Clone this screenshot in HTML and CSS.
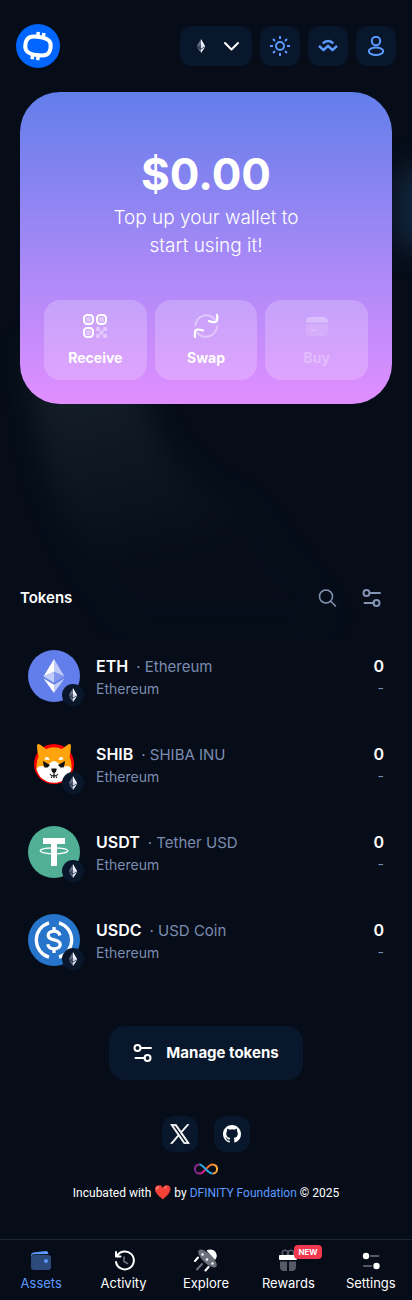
FILE: index.html
```html
<!DOCTYPE html>
<html lang="en">
<head>
<meta charset="utf-8">
<meta name="viewport" content="width=device-width, initial-scale=1">
<title>Wallet</title>
<link rel="stylesheet" href="styles.css">
</head>
<body>
<svg class="defs" aria-hidden="true">
  <symbol id="eth-mini" viewBox="0 0 22 22">
    <path fill="#66718c" d="M11 4 6.800 11.200 11 13.600zM11 14.400 6.800 12 11 18z"/>
    <path fill="#f4f6fb" d="M11 4l4.200 7.200L11 13.600zM11 14.400l4.200-2.400L11 18z"/>
    <path fill="#d3d9e6" d="M11 9.400l4.200 1.800L11 13.600z"/>
    <path fill="#46516d" d="M11 9.400 6.800 11.200 11 13.600z"/>
  </symbol>
  <symbol id="sliders" viewBox="0 0 20 20">
    <g fill="none" stroke="currentColor" stroke-width="2" stroke-linecap="round">
      <circle cx="4.500" cy="5" r="3"/><path d="M8 5h10M2.500 15H12"/><circle cx="14.500" cy="15" r="3"/>
    </g>
  </symbol>
</svg>
<div class="page">
  <svg class="backdrop" viewBox="0 0 412 640" aria-hidden="true">
    <defs>
      <filter id="soft" x="-50%" y="-50%" width="200%" height="200%" color-interpolation-filters="sRGB"><feGaussianBlur stdDeviation="13"/></filter>
      <linearGradient id="fade" gradientUnits="userSpaceOnUse" x1="80" y1="390" x2="130" y2="570"><stop offset="0" stop-color="#141e27"/><stop offset="1" stop-color="#060d19"/></linearGradient>
    </defs>
    <path d="M32 340H136C142 420 165 480 240 505L330 620H130C60 540 30 450 32 340z" fill="url(#fade)" filter="url(#soft)"/>
    <rect x="396" y="168" width="60" height="82" rx="20" fill="#12253c" filter="url(#soft)"/>
  </svg>

  <header class="topbar">
    <a class="logo" href="#" aria-label="Home">
      <svg viewBox="0 0 44 44" aria-hidden="true">
        <circle cx="22" cy="22" r="22" fill="#0066ff"/>
        <g fill="none" stroke="#fff" stroke-width="4" transform="rotate(9 22 22)">
          <path d="M22 12.800c9 0 12.700 2.200 12.700 9.200S31 31.200 22 31.200 9.300 29 9.300 22 13 12.800 22 12.800z"/>
          <path stroke-width="3.500" d="M20.200 8.200v4M25.800 8.200v4M18.200 32v4M23.800 32v4"/>
        </g>
      </svg>
    </a>
    <div class="tools">
      <button class="tool tool-network" aria-label="Select network">
        <svg class="i22" aria-hidden="true"><circle cx="11" cy="11" r="10.500" fill="none" stroke="#0c1a2e"/><use href="#eth-mini"/></svg>
        <svg class="i20" viewBox="0 0 20 20" aria-hidden="true"><path d="M3 7l6.500 6.500L16 7" fill="none" stroke="#fff" stroke-width="2" stroke-linecap="round" stroke-linejoin="round"/></svg>
      </button>
      <button class="tool" aria-label="Theme">
        <svg class="i20" viewBox="0 0 20 20" fill="none" stroke="currentColor" stroke-width="2" aria-hidden="true"><circle cx="10" cy="10" r="4"/><path d="M10 0v3M10 17v3M0 10h3M17 10h3M3 3l2 2M15 15l2 2M17 3l-2 2M5 15l-2 2"/></svg>
      </button>
      <button class="tool" aria-label="WalletConnect">
        <svg class="i20" viewBox="0 0 20 20" fill="none" stroke="currentColor" stroke-width="2.500" stroke-linejoin="round" aria-hidden="true"><path d="M4.800 7.500c3-3.300 7.600-3.300 10.500 0M1 9.800l4.500 4.300L10 9.800l4.500 4.300L19 9.800"/></svg>
      </button>
      <button class="tool" aria-label="Account">
        <svg class="i20" viewBox="0 0 20 20" fill="none" stroke="currentColor" stroke-width="2" aria-hidden="true"><circle cx="10" cy="5" r="4.200"/><ellipse cx="10" cy="15.300" rx="7.200" ry="3.700"/></svg>
      </button>
    </div>
  </header>

  <main>
    <section class="hero">
      <p class="balance">$0.00</p>
      <p class="tagline">Top up your wallet to<br>start using it!</p>
      <div class="actions">
        <button class="action">
          <svg class="i26" viewBox="0 0 26 26" aria-hidden="true">
            <g fill="none" stroke="#fff" stroke-width="2"><rect x="2" y="2" width="9" height="9" rx="3.200"/><rect x="15" y="2" width="9" height="9" rx="3.200"/><rect x="2" y="15" width="9" height="9" rx="3.200"/></g>
            <g fill="#fff" opacity=".4"><circle cx="6.500" cy="6.500" r="2.700"/><circle cx="19.500" cy="6.500" r="2.700"/><circle cx="6.500" cy="19.500" r="2.700"/><rect x="14" y="14" width="4" height="4" rx="1"/><rect x="21" y="14" width="4" height="4" rx="1"/><rect x="17.500" y="17.500" width="4" height="4" rx="1"/><rect x="14" y="21" width="4" height="4" rx="1"/><rect x="21" y="21" width="4" height="4" rx="1"/></g>
          </svg>
          Receive
        </button>
        <button class="action">
          <svg class="i26" viewBox="0 0 26 26" fill="none" stroke="#fff" stroke-width="2" stroke-linecap="round" stroke-linejoin="round" aria-hidden="true">
            <path opacity=".4" d="M2.500 12.500C3.500 2 15.500-1 22 6.500M24 13.500C23 24 10.500 27 4 19.500"/>
            <path stroke-width="2.300" d="M24 2c1 6.500 0 8.500-8 6.200M2 24c-.6-7 0-9 8-6.500"/>
          </svg>
          Swap
        </button>
        <button class="action" disabled>
          <svg class="i26" viewBox="0 0 26 26" aria-hidden="true"><path fill="#fff" opacity=".4" d="M2 11h22v7.500q0 4.500-4.500 4.500h-13Q2 23 2 18.500z"/><path fill="#fff" d="M2 9.500Q2 4 7 4h12q5 0 5 5.500z"/><path stroke="#fff" stroke-width="1.600" stroke-linecap="round" d="M7 17h4"/></svg>
          Buy
        </button>
      </div>
    </section>

    <section class="tokens">
      <div class="tokens-head">
        <h2>Tokens</h2>
        <div class="tokens-tools">
          <button class="plain" aria-label="Search"><svg class="i20" viewBox="0 0 20 20" fill="none" stroke="currentColor" stroke-width="1.500" stroke-linecap="round" aria-hidden="true"><circle cx="8" cy="8.500" r="6.500"/><path d="M13 13.500l4.500 4.500"/></svg></button>
          <button class="plain" aria-label="Filter tokens"><svg class="i20" aria-hidden="true"><use href="#sliders"/></svg></button>
        </div>
      </div>
      <ul class="token-list">
        <li class="token">
          <div class="coin">
            <svg class="i52" viewBox="0 0 52 52" aria-hidden="true"><circle cx="26" cy="26" r="26" fill="#627eea"/><path fill="#fff" d="M26 9 15.500 26.600 26 21.800zM15.500 28.600 26 34.800V43z"/><path fill="#c0cbf7" d="M26 9l10.500 17.600L26 21.800zM15.500 26.600 26 21.800V32.800zM26 34.800l10.500-6.200L26 43z"/><path fill="#8197ee" d="M26 21.800l10.500 4.800L26 32.800z"/></svg>
            <svg class="badge" aria-hidden="true"><use href="#eth-mini"/></svg>
          </div>
          <div class="names"><p class="pair"><strong>ETH</strong><span>· Ethereum</span></p><p class="network">Ethereum</p></div>
          <div class="amounts"><strong>0</strong><span class="network">-</span></div>
        </li>
        <li class="token">
          <div class="coin">
            <svg class="i52" viewBox="0 0 52 52" aria-hidden="true">
              <circle cx="26" cy="26" r="20" fill="#fa0000"/>
              <path fill="#ffa40d" d="M9 8q0-3 3-1.500L18 11q8-3.500 16 0l6-4.500q3-1.500 3 1.500-.2 6-1.500 10.500Q44 24 43.500 32q-3 4-9.500 8L18 40q-7-4-9.500-8Q8 24 10.500 18.500 9 13 9 8z"/>
              <path fill="#fff" d="M8.600 31q2-4 7.400-2.500l4.500-1.500Q23 23 26 23t5.500 4l4.500 1.500q5.400-1.500 7.400 2.500-2 9-10.400 12.500Q26 46 19 43.500 10.600 40 8.600 31z"/>
              <path fill="#fff" d="M16.500 21.500q0-3 3-2.500 2 .5 1.800 3zM35.500 21.500q0-3-3-2.500-2 .5-1.800 3z"/>
              <path fill="#111" d="M15 23l7 4-2.500 2.500h-3Q15 26 15 23zM37 23l-7 4 2.500 2.500h3Q37 26 37 23zM23.500 30.500h5q.8 3.500-2.500 4.500-3.300-1-2.500-4.500z"/>
              <path fill="none" stroke="#111" stroke-width="1.200" d="M26 34v3.500M22 36q2 2.500 4 1.500 2 1 4-1.500M23.500 38.500v1.500M28.500 38.500v1.500M26 38v2"/>
            </svg>
            <svg class="badge" aria-hidden="true"><use href="#eth-mini"/></svg>
          </div>
          <div class="names"><p class="pair"><strong>SHIB</strong><span>· SHIBA INU</span></p><p class="network">Ethereum</p></div>
          <div class="amounts"><strong>0</strong><span class="network">-</span></div>
        </li>
        <li class="token">
          <div class="coin">
            <svg class="i52" viewBox="0 0 52 52" aria-hidden="true"><circle cx="26" cy="26" r="26" fill="#50af95"/><path fill="#fff" d="M15 12h22v6h-8v22h-6V18h-8z"/><ellipse cx="26" cy="24.800" rx="13.800" ry="3" fill="none" stroke="#fff" stroke-width="1.200"/></svg>
            <svg class="badge" aria-hidden="true"><use href="#eth-mini"/></svg>
          </div>
          <div class="names"><p class="pair"><strong>USDT</strong><span>· Tether USD</span></p><p class="network">Ethereum</p></div>
          <div class="amounts"><strong>0</strong><span class="network">-</span></div>
        </li>
        <li class="token">
          <div class="coin">
            <svg class="i52" viewBox="0 0 52 52" aria-hidden="true"><circle cx="26" cy="26" r="26" fill="#2775ca"/><g fill="none" stroke="#fff" stroke-width="3.300"><path d="M21 8.800a18 18 0 0 0 0 34.400M31 8.800a18 18 0 0 1 0 34.400"/><path d="M32 21.500c-.8-3-3-4.300-6-4.300-3.500 0-5.800 1.700-5.800 4.300 0 6 12 2.800 12 9 0 2.700-2.600 4.300-6.200 4.300-3.400 0-5.600-1.500-6.200-4.600M26 13v4.200M26 34.800V39"/></g></svg>
            <svg class="badge" aria-hidden="true"><use href="#eth-mini"/></svg>
          </div>
          <div class="names"><p class="pair"><strong>USDC</strong><span>· USD Coin</span></p><p class="network">Ethereum</p></div>
          <div class="amounts"><strong>0</strong><span class="network">-</span></div>
        </li>
      </ul>
      <button class="manage"><svg class="i20" aria-hidden="true"><use href="#sliders"/></svg>Manage tokens</button>
    </section>
  </main>

  <footer class="footer">
    <div class="socials">
      <a href="#" aria-label="X"><svg class="i20" viewBox="0 0 24 24" fill="currentColor" aria-hidden="true"><path d="M14.200 10.200 22.600.6h-2L13.300 9 7.500.6H.8l8.800 12.700L.8 23.400h2l7.700-8.900 6.100 8.900h6.700zM11.500 13.300l-.9-1.300L3.500 2.100h3.100l5.700 8.200.9 1.300 7.500 10.600h-3.100z" stroke="currentColor" stroke-width=".9"/></svg></a>
      <a href="#" aria-label="GitHub"><svg class="i18" viewBox="0 0 16 16" fill="currentColor" aria-hidden="true"><path d="M8 0C3.580 0 0 3.580 0 8c0 3.540 2.290 6.530 5.470 7.590.4.070.55-.17.55-.38v-1.490c-2.010.37-2.530-.49-2.690-.94-.09-.23-.48-.94-.82-1.130-.28-.15-.68-.52-.01-.53.63-.01 1.080.58 1.230.82.72 1.210 1.870.87 2.330.66.07-.52.28-.87.51-1.070-1.780-.2-3.640-.89-3.640-3.950 0-.87.31-1.590.82-2.150-.08-.2-.36-1.020.08-2.120 0 0 .67-.21 2.200.82a7.500 7.500 0 0 1 4 0c1.530-1.040 2.200-.82 2.200-.82.44 1.100.16 1.920.08 2.120.51.56.82 1.270.82 2.150 0 3.070-1.870 3.750-3.650 3.950.29.25.54.73.54 1.480v2.200c0 .21.15.46.55.38A8 8 0 0 0 16 8c0-4.420-3.580-8-8-8z"/></svg></a>
    </div>
    <svg class="infinity" viewBox="0 0 24 12" fill="none" stroke-width="2" aria-hidden="true">
      <defs>
        <linearGradient id="warm"><stop offset="0" stop-color="#f15a24"/><stop offset="1" stop-color="#fbb03b"/></linearGradient>
        <linearGradient id="pink"><stop offset="0" stop-color="#7b2a90"/><stop offset="1" stop-color="#ed1e79"/></linearGradient>
      </defs>
      <path stroke="url(#warm)" d="M12 6c3-3.500 4.300-4.600 6.500-4.600A4.600 4.600 0 0 1 18.500 10.600"/>
      <path stroke="url(#pink)" d="M12 6c-3 3.500-4.300 4.600-6.500 4.600A4.600 4.600 0 0 1 5.500 1.400"/>
      <path stroke="#29abe2" d="M5.500 1.400C9.500 1.400 13.500 10.600 18.500 10.600"/>
    </svg>
    <p class="credit">Incubated with <span class="heart">❤️</span> by <a href="#">DFINITY Foundation</a> © 2025</p>
  </footer>

  <nav class="tabs">
    <a class="active" href="#" aria-current="page"><svg class="i24" viewBox="0 0 24 24" aria-hidden="true"><rect x="2" y="6" width="20" height="15" rx="3" fill="#2c4a7c"/><path fill="#5c9aff" d="M2 6.500Q2 4 4.500 3.500L17 2q2-.2 2.500 3L5 5.300Q3 5.400 2 7.500z"/><circle cx="17" cy="12" r="2" fill="#5c9aff"/></svg>Assets</a>
    <a href="#"><svg class="i24" viewBox="0 0 24 24" fill="none" stroke="#fff" stroke-width="2" stroke-linecap="round" stroke-linejoin="round" aria-hidden="true"><path d="M4 3v4.500h4.500M5 7a9 9 0 1 1-1 6"/><path stroke="#6a717d" stroke-width="1.600" d="M12 8v4.500l3.500 2"/></svg>Activity</a>
    <a href="#"><svg class="i24" viewBox="0 0 24 24" aria-hidden="true"><path fill="#fff" d="M12.500 1.500C16-.5 20 .5 21.500 3s2 5-.5 8z"/><ellipse cx="13.500" cy="9.500" rx="12" ry="4.800" transform="rotate(44 13.500 9.500)" fill="#6b717b"/><g fill="#fff"><circle cx="8.500" cy="5.500" r="1.200"/><circle cx="13" cy="10.500" r="1.200"/><circle cx="18.500" cy="14.500" r="1.200"/></g><path stroke="#fff" stroke-width="2" stroke-linecap="round" d="M4 8.500 1 12M14.500 18l-3 3.500"/><path stroke="#6b717b" stroke-width="2" stroke-linecap="round" d="M8 15l-5 5.500"/></svg>Explore</a>
    <a href="#"><span class="gift"><svg class="i24" viewBox="0 0 24 24" aria-hidden="true"><g fill="none" stroke="#555c67" stroke-width="1.600"><circle cx="9" cy="4" r="2.800"/><circle cx="15" cy="4" r="2.800"/></g><path fill="#555c67" d="M4 12.500h7V22H8q-4 0-4-4zM13 12.500h7V18q0 4-4 4h-3z"/><rect x="3" y="6" width="18" height="5" rx="1" fill="#fff"/></svg><span class="new">NEW</span></span>Rewards</a>
    <a href="#"><svg class="i24" viewBox="0 0 24 24" aria-hidden="true"><path stroke="#555c67" stroke-width="2" stroke-linecap="round" d="M12 7h7.500M5 17h7"/><circle cx="7" cy="7" r="3.200" fill="#fff"/><circle cx="17.500" cy="17" r="3.200" fill="#fff"/></svg>Settings</a>
  </nav>
</div>
</body>
</html>
```
FILE: styles.css
```css
* { box-sizing: border-box; margin: 0; padding: 0; }
body { background: #060d19; color: #fff; font-family: Inter, "Liberation Sans", sans-serif; font-size: 15px; line-height: 24px; }
button { border: 0; background: none; color: inherit; font: inherit; cursor: pointer; }
a { color: inherit; text-decoration: none; }
svg { display: block; flex: none; }
ul { list-style: none; }
.defs { position: absolute; width: 0; height: 0; }

.i18 { width: 18px; height: 18px; }
.i20 { width: 20px; height: 20px; }
.i22 { width: 22px; height: 22px; }
.i24 { width: 24px; height: 24px; }
.i26 { width: 26px; height: 26px; }
.i52 { width: 52px; height: 52px; }

.page { position: relative; isolation: isolate; display: flex; flex-direction: column; min-height: 100vh; }
.backdrop { position: absolute; top: 0; left: 0; width: 100%; z-index: -1; overflow: hidden; }

.topbar { display: flex; align-items: center; justify-content: space-between; padding: 24px 16px; }
.logo svg { width: 44px; height: 44px; }
.tools { display: flex; gap: 8px; }
.tool { display: flex; align-items: center; justify-content: center; width: 40px; height: 40px; border-radius: 12px; background: #08172b; color: #5c9aff; }
.tool-network { width: 72px; gap: 10px; }

main { padding: 0 20px; }
.hero { padding: 52px 24px 24px; border-radius: 40px; background: linear-gradient(#627eea, #b18af8 62%, #e18eff); text-align: center; }
.balance { font-size: 44px; line-height: 60px; font-weight: 700; }
.tagline { font-size: 19px; line-height: 28px; font-weight: 300; }
.actions { display: grid; grid-template-columns: repeat(3, 1fr); gap: 8px; margin-top: 40px; }
.action { display: flex; flex-direction: column; align-items: center; gap: 9px; height: 80px; padding-top: 13px; border-radius: 16px; background: rgba(255, 255, 255, .2); font-size: 14px; line-height: 20px; font-weight: 700; }
.action:disabled { color: rgba(255, 255, 255, .3); }
.action:disabled svg { opacity: .3; }

.tokens { display: flex; flex-direction: column; margin-top: 172px; }
.tokens-head { display: flex; align-items: center; justify-content: space-between; height: 44px; }
.tokens-head h2 { font-size: 15px; font-weight: 600; }
.tokens-tools { display: flex; gap: 4px; color: #8494b5; }
.plain { display: grid; place-items: center; width: 40px; height: 40px; }
.token-list { margin-top: 12px; }
.token { display: flex; align-items: center; gap: 16px; padding: 18px 8px; }
.coin { position: relative; }
.badge { position: absolute; right: -4px; bottom: -4px; width: 22px; height: 22px; border-radius: 50%; background: #08172b; }
.names { flex: 1; }
.pair { display: flex; align-items: baseline; gap: 8px; color: #7b8cae; }
.pair strong { color: #fff; font-size: 16px; font-weight: 600; }
.network { color: #7b8cae; font-size: 14px; line-height: 20px; }
.amounts { display: flex; flex-direction: column; align-items: flex-end; }
.amounts strong { font-size: 16px; font-weight: 600; }
.manage { display: flex; align-items: center; align-self: center; gap: 13px; height: 54px; margin-top: 42px; padding: 0 24px; border-radius: 16px; background: #08172b; font-weight: 700; }

.footer { display: flex; flex-direction: column; align-items: center; padding: 36px 16px; }
.socials { display: flex; gap: 16px; }
.socials a { display: grid; place-items: center; width: 36px; height: 36px; border-radius: 12px; background: #08172b; }
.infinity { width: 24px; height: 12px; margin-top: 11px; }
.credit { margin-top: 8px; font-family: Roboto, "Liberation Sans", sans-serif; font-size: 12px; line-height: 20px; }
.credit a { color: #5c9aff; }
.heart { font-size: 14px; line-height: 16px; }

.tabs { position: sticky; bottom: 0; display: grid; grid-template-columns: repeat(5, 1fr); margin-top: auto; padding: 9px 0; border-top: 1px solid #1c2430; background: #060d19; font-size: 13px; line-height: 20px; }
.tabs a { display: flex; flex-direction: column; align-items: center; }
.tabs .active { color: #5c9aff; }
.gift { position: relative; }
.new { position: absolute; left: 18px; top: -4px; padding: 0 4px; border-radius: 4px; background: #f0384f; font-size: 8px; line-height: 14px; font-weight: 700; }
```
